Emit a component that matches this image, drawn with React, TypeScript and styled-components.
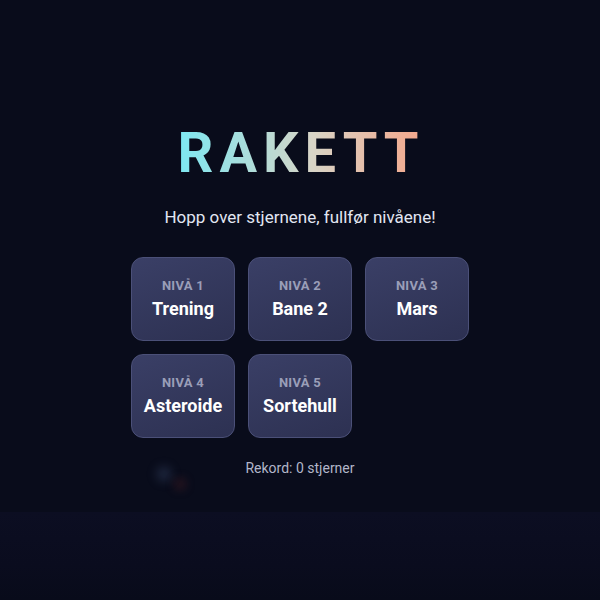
import React from "react";
import styled, { createGlobalStyle } from "styled-components";

const GlobalStyle = createGlobalStyle`
  html, body {
    margin: 0;
    padding: 0;
    background: #0a0d1c;
    font-family: Roboto, "Liberation Sans", sans-serif;
  }
`;

const Stage = styled.div`
  position: relative;
  width: 600px;
  height: 600px;
  overflow: hidden;
  background: #090c1b;
`;

const Ground = styled.div`
  position: absolute;
  left: 0;
  right: 0;
  bottom: 0;
  height: 88px;
  background: linear-gradient(180deg, #0c0e22 0%, #0a0c1e 60%, #080b1a 100%);
`;

const Glow = styled.div<{ $x: number; $y: number; $c: string; $s: number }>`
  position: absolute;
  left: ${(p) => p.$x}px;
  top: ${(p) => p.$y}px;
  width: ${(p) => p.$s}px;
  height: ${(p) => p.$s}px;
  border-radius: 50%;
  background: ${(p) => p.$c};
  filter: blur(5px);
`;

const Overlay = styled.div`
  position: relative;
  display: flex;
  flex-direction: column;
  align-items: center;
  padding-top: 125px;
`;

const Title = styled.h1`
  margin: 0;
  font-size: 56px;
  line-height: 56px;
  font-weight: 700;
  letter-spacing: 6px;
  margin-right: -2px;
  background: linear-gradient(90deg, #7de8f2 0%, #d8d4c6 55%, #f4a68a 100%);
  -webkit-background-clip: text;
  background-clip: text;
  color: transparent;
`;

const Subtitle = styled.p`
  margin: 26px 0 0;
  font-size: 17px;
  line-height: 20px;
  color: #e2e6f2;
`;

const Levels = styled.div`
  margin-top: 30px;
  display: grid;
  grid-template-columns: repeat(3, 104px);
  gap: 13px 13px;
`;

const LevelButton = styled.button`
  width: 104px;
  height: 84px;
  box-sizing: border-box;
  display: flex;
  flex-direction: column;
  align-items: center;
  justify-content: center;
  gap: 4px;
  padding: 0;
  border-radius: 12px;
  border: 1px solid #4b5078;
  background: linear-gradient(160deg, #3a3f66 0%, #2d3152 100%);
  cursor: pointer;
  font-family: inherit;
`;

const LevelTag = styled.span`
  font-size: 13px;
  line-height: 16px;
  font-weight: 700;
  letter-spacing: 0.3px;
  color: #9a9eb8;
`;

const LevelName = styled.span`
  font-size: 18px;
  line-height: 22px;
  font-weight: 700;
  color: #ffffff;
`;

const Record = styled.p`
  margin: 21px 0 0;
  font-size: 14px;
  line-height: 18px;
  color: #b2b6c9;
`;

const levels = [
  { n: 1, name: "Trening" },
  { n: 2, name: "Bane 2" },
  { n: 3, name: "Mars" },
  { n: 4, name: "Asteroide" },
  { n: 5, name: "Sortehull" },
];

export default function App() {
  return (
    <>
      <GlobalStyle />
      <Stage>
        <Ground />
        <Glow $x={156} $y={466} $s={16} $c="rgba(70, 90, 130, 0.3)" />
        <Glow $x={174} $y={478} $s={12} $c="rgba(120, 40, 40, 0.3)" />
        <Overlay>
          <Title>RAKETT</Title>
          <Subtitle>Hopp over stjernene, fullfør nivåene!</Subtitle>
          <Levels>
            {levels.map((l) => (
              <LevelButton key={l.n}>
                <LevelTag>NIVÅ {l.n}</LevelTag>
                <LevelName>{l.name}</LevelName>
              </LevelButton>
            ))}
          </Levels>
          <Record>Rekord: 0 stjerner</Record>
        </Overlay>
      </Stage>
    </>
  );
}
